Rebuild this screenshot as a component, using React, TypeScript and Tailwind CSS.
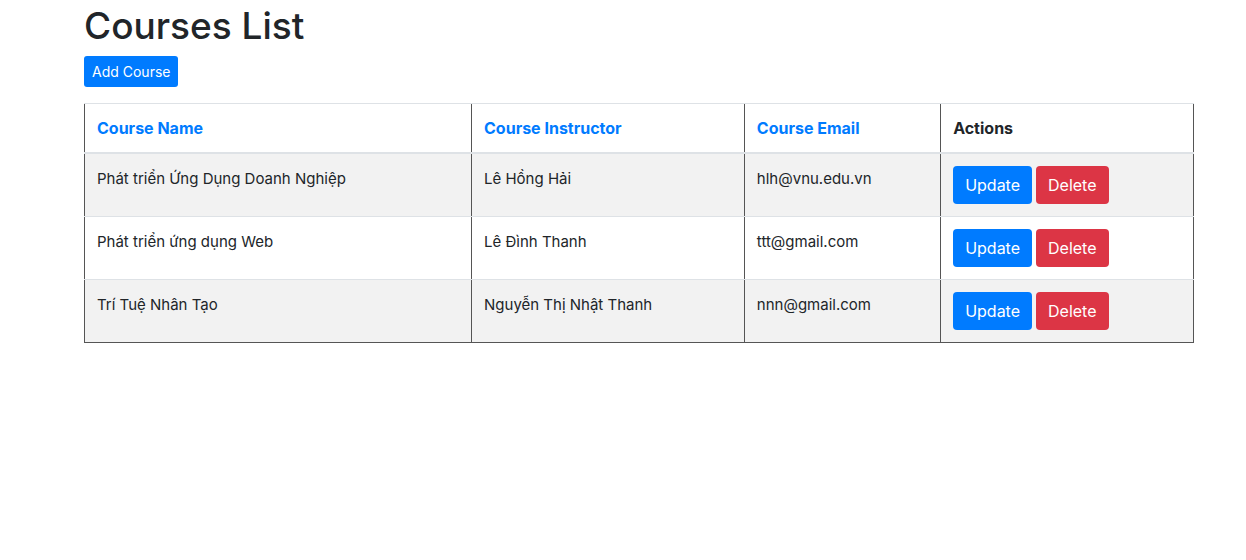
const courses = [
  { name: "Phát triển Ứng Dụng Doanh Nghiệp", instructor: "Lê Hồng Hải", email: "hlh@vnu.edu.vn" },
  { name: "Phát triển ứng dụng Web", instructor: "Lê Đình Thanh", email: "ttt@gmail.com" },
  { name: "Trí Tuệ Nhân Tạo", instructor: "Nguyễn Thị Nhật Thanh", email: "nnn@gmail.com" },
];

const headers = ["Course Name", "Course Instructor", "Course Email"];

// The light row lines are solid, so they take precedence over the inset column lines where they cross.
const headerCell =
  "border-x border-t border-b-2 [border-style:solid_inset] border-x-[#555] border-y-[#dee2e6] p-3 text-left leading-6 font-bold";
const bodyCell =
  "border-x border-t [border-style:solid_inset_none] border-x-[#555] border-t-[#dee2e6] p-3 text-[15px] leading-[26px]";

export default function App() {
  return (
    <div className="pl-8">
      <main className="mx-auto max-w-[1140px] px-[15px] font-['Inter',sans-serif] text-base text-[#212529]">
        <h1 className="mb-1.5 pt-0.5 text-[37px] leading-[48px] font-medium">Courses List</h1>
        <button type="button" className="mb-4 block rounded-[3px] bg-[#007bff] px-2 py-[5px] text-sm leading-[21px] text-white">
          Add Course
        </button>
        <table className="w-full table-fixed border-collapse border [border-style:inset] border-[#555]">
          <colgroup>
            <col className="w-[34.9%]" />
            <col className="w-[24.6%]" />
            <col className="w-[17.7%]" />
            <col />
          </colgroup>
          <thead>
            <tr>
              {headers.map((header) => (
                <th key={header} scope="col" className={headerCell}>
                  <a href="#" className="text-[#007bff]">{header}</a>
                </th>
              ))}
              <th scope="col" className={headerCell}>Actions</th>
            </tr>
          </thead>
          <tbody>
            {courses.map((course) => (
              <tr key={course.email} className="align-top odd:bg-[#f2f2f2]">
                <td className={bodyCell}>{course.name}</td>
                <td className={bodyCell}>{course.instructor}</td>
                <td className={bodyCell}>{course.email}</td>
                <td className={bodyCell}>
                  <div className="flex gap-1 text-base leading-6 text-white">
                    <button type="button" className="rounded bg-[#007bff] px-3 py-[7px]">Update</button>
                    <button type="button" className="rounded bg-[#dc3545] px-3 py-[7px]">Delete</button>
                  </div>
                </td>
              </tr>
            ))}
          </tbody>
        </table>
      </main>
    </div>
  );
}
